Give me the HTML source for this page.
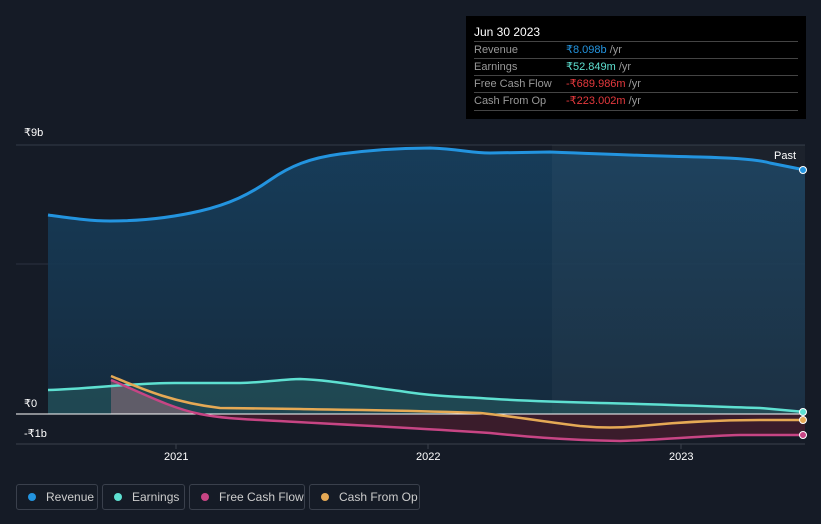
<!DOCTYPE html><html><head><style>
body{margin:0;width:821px;height:524px;background:#151b26;font-family:"Liberation Sans",sans-serif;overflow:hidden;position:relative}
.tt{position:absolute;left:466px;top:16px;width:340px;height:103px;background:#000;color:#fff;font-size:11px}
.tt .h{position:absolute;left:8px;top:9px;font-size:12px}
.row{position:absolute;left:8px;width:324px;height:17px;border-top:1px solid #444;line-height:17px;color:#999}
.row span{position:absolute;left:92px}
.lab{position:absolute;color:#fff;font-size:11px}
.leg{position:absolute;top:484px;height:26px;border:1px solid #3a404c;border-radius:3px;color:#ccc;font-size:12px;line-height:25px;box-sizing:border-box}
.leg i{display:inline-block;width:8px;height:8px;border-radius:50%;margin:0 10px 0 11px;vertical-align:0}
</style></head><body>
<svg width="821" height="524" style="position:absolute;left:0;top:0">
<defs><linearGradient id="rg" x1="0" y1="0" x2="0" y2="1"><stop offset="0" stop-color="#17405f"/><stop offset="1" stop-color="#152c40"/></linearGradient></defs>
<line x1="16" y1="145" x2="805" y2="145" stroke="#333b48"/>
<line x1="16" y1="264" x2="805" y2="264" stroke="#2a3140"/>
<path d="M48,215 C70,218 90,221 110,221 C140,221 170,218 200,211 C230,204 250,194 270,180 C290,166 310,158 340,154 C370,150 400,148 430,148 C460,149 470,153 490,153 L550,152 C600,154 650,156 700,157 C740,158 760,160 770,163 C785,166 795,168 805,170 L805,414 L48,414 Z" fill="url(#rg)" opacity="0.9"/>
<rect x="552" y="145" width="253" height="269" fill="#ffffff" opacity="0.03"/>
<path d="M48,390 C90,389 130,383 175,383 L240,383 C270,382 285,379 300,379 C330,380 360,386 400,391 C430,396 460,397 480,398 C520,401 560,402 600,403 C650,404 700,406 760,408 L805,412 L805,414 L48,414 Z" fill="#2d6b6a" opacity="0.45"/>
<path d="M111,380 C140,392 170,408 200,414 L111,414 Z" fill="#8a6a78" opacity="0.6"/>
<path d="M200,414 C220,418 240,419 260,420 C330,424 400,427 490,433 C520,436 560,440 620,441 C660,440 700,436 740,435 L805,435 L805,414 Z" fill="#4a1d2d" opacity="0.7"/>
<line x1="16" y1="414" x2="805" y2="414" stroke="#fff" stroke-width="1"/>
<line x1="16" y1="444" x2="805" y2="444" stroke="#3a404c"/>
<line x1="176" y1="444" x2="176" y2="449" stroke="#3a404c"/><line x1="428" y1="444" x2="428" y2="449" stroke="#3a404c"/><line x1="681" y1="444" x2="681" y2="449" stroke="#3a404c"/>
<path d="M48,215 C70,218 90,221 110,221 C140,221 170,218 200,211 C230,204 250,194 270,180 C290,166 310,158 340,154 C370,150 400,148 430,148 C460,149 470,153 490,153 L550,152 C600,154 650,156 700,157 C740,158 760,160 770,163 C785,166 795,168 805,170" fill="none" stroke="#2394df" stroke-width="3"/>
<path d="M48,390 C90,389 130,383 175,383 L240,383 C270,382 285,379 300,379 C330,380 360,386 400,391 C430,396 460,397 480,398 C520,401 560,402 600,403 C650,404 700,406 760,408 L805,412" fill="none" stroke="#5ee0d1" stroke-width="2.5"/>
<path d="M111,380 C140,392 170,408 200,414 C220,418 240,419 260,420 C330,424 400,427 490,433 C520,436 560,440 620,441 C660,440 700,436 740,435 L805,435" fill="none" stroke="#c74584" stroke-width="2.5"/>
<path d="M111,376 C140,388 170,402 220,408 L300,409 C350,410 400,410 480,413 C510,416 540,421 580,426 C600,428 620,428 640,426 C680,422 720,420 760,420 L805,420" fill="none" stroke="#e5a955" stroke-width="2.5"/>
<circle cx="803" cy="170" r="3.5" fill="#2394df" stroke="#fff"/>
<circle cx="803" cy="412" r="3.5" fill="#5ee0d1" stroke="#fff"/>
<circle cx="803" cy="420" r="3.5" fill="#e5a955" stroke="#fff"/>
<circle cx="803" cy="435" r="3.5" fill="#c74584" stroke="#fff"/>
</svg>
<div class="lab" style="left:24px;top:126px">₹9b</div>
<div class="lab" style="left:24px;top:397px">₹0</div>
<div class="lab" style="left:24px;top:427px">-₹1b</div>
<div class="lab" style="left:774px;top:150px">Past</div>
<div class="lab" style="left:164px;top:451px">2021</div>
<div class="lab" style="left:416px;top:451px">2022</div>
<div class="lab" style="left:669px;top:451px">2023</div>
<div class="tt"><div class="h">Jun 30 2023</div>
<div class="row" style="top:25px">Revenue<span><b style="font-weight:normal;color:#2394df">₹8.098b</b> /yr</span></div>
<div class="row" style="top:42px">Earnings<span><b style="font-weight:normal;color:#5ee0d1">₹52.849m</b> /yr</span></div>
<div class="row" style="top:59px">Free Cash Flow<span><b style="font-weight:normal;color:#e5393d">-₹689.986m</b> /yr</span></div>
<div class="row" style="top:76px">Cash From Op<span><b style="font-weight:normal;color:#e5393d">-₹223.002m</b> /yr</span></div>
<div class="row" style="top:94px;height:0"></div></div>
<div class="leg" style="left:16px;width:82px"><i style="background:#2394df"></i>Revenue</div>
<div class="leg" style="left:102px;width:83px"><i style="background:#5ee0d1"></i>Earnings</div>
<div class="leg" style="left:189px;width:116px"><i style="background:#c74584"></i>Free Cash Flow</div>
<div class="leg" style="left:309px;width:111px"><i style="background:#e5a955"></i>Cash From Op</div>
</body></html>
